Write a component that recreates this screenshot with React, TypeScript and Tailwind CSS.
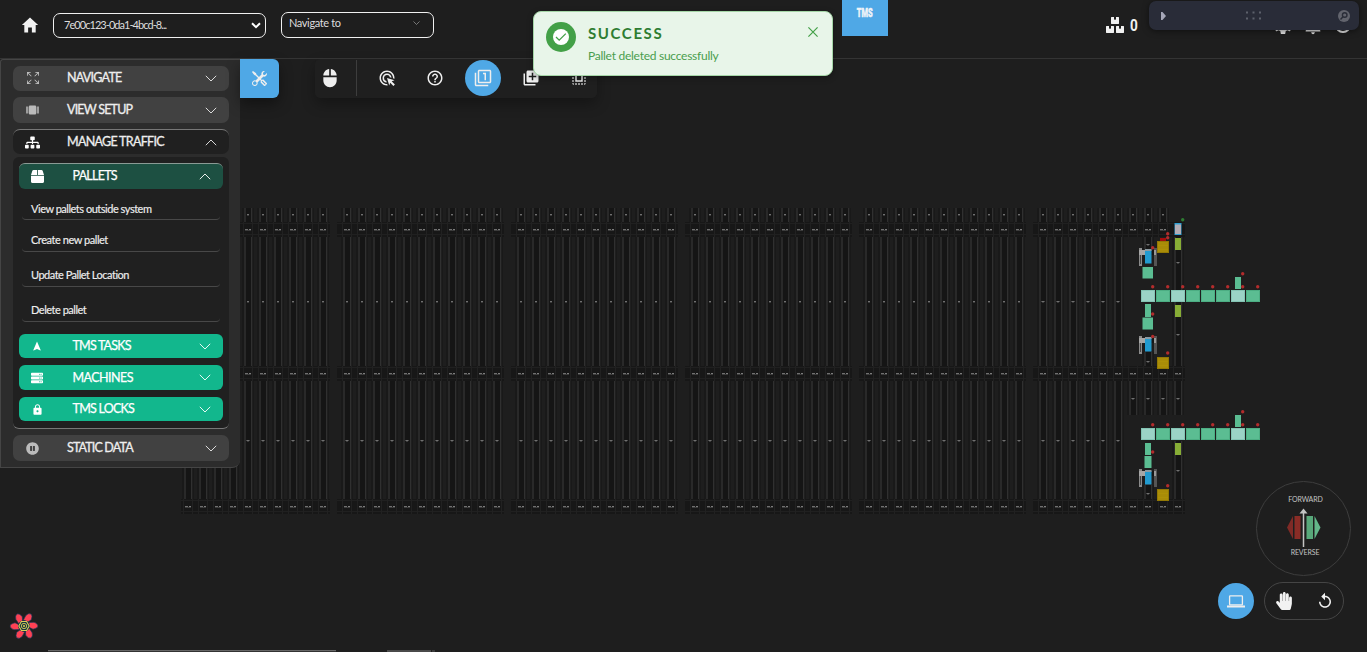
import React from "react";
import { IoMdHome, IoMdNavigate, IoMdLock, IoMdSettings } from "react-icons/io";
import { FaSitemap, FaBox, FaServer, FaPauseCircle, FaBoxes, FaHandPaper } from "react-icons/fa";
import { MdMouse, MdAdsClick, MdHelpOutline, MdFilter1, MdAddToPhotos, MdSelectAll, MdReplay, MdNotifications } from "react-icons/md";
import { BsTools, BsArrowsFullscreen } from "react-icons/bs";

function Chevron({ up = false, className = "w-[12px]" }: { up?: boolean; className?: string }) {
  return (
    <svg viewBox="0 0 12 7" className={className} fill="none" stroke="currentColor" strokeWidth="0.9">
      <path d={up ? "M.8 6.2 6 1l5.200 5.200" : "M.8.8 6 6 11.200.8"} />
    </svg>
  );
}

function CarouselIcon() {
  return (
    <svg viewBox="0 0 13 10" className="w-[13px] h-[10px]" fill="currentColor">
      <rect x="3" y="0.500" width="7" height="9" rx=".7" />
      <rect x="0" y="1.500" width="2.500" height="7" opacity=".75" />
      <rect x="10.500" y="1.500" width="2.500" height="7" opacity=".75" />
    </svg>
  );
}

/* ---------- floor map ---------- */

const range = (from: number, to: number) => {
  const xs: number[] = [];
  for (let x = from; x <= to; x += 15) xs.push(x);
  return xs;
};

const blocks = [range(188, 323), range(347, 497), range(521, 671), range(695, 845), range(869, 1019)];
const aisles = blocks.flat();

function Lane({ x, y1, y2 }: { x: number; y1: number; y2: number }) {
  const h = y2 - y1;
  return (
    <g>
      <rect x={x - 6} y={y1} width="12" height={h} fill="#191919" />
      <rect x={x - 4} y={y1} width="9" height={h} fill="#151515" />
      <rect x={x - 4} y={y1} width="2" height={h} fill="#292929" />
      <rect x={x + 3} y={y1} width="1" height={h} fill="#303030" />
      <rect x={x + 4} y={y1} width="1" height={h} fill="#1f1f1f" />
    </g>
  );
}

function Hub({ x1, x2, y, xs }: { x1: number; x2: number; y: number; xs: number[] }) {
  return (
    <g>
      <rect x={x1} y={y - 7} width={x2 - x1} height="15" fill="#171717" />
      <rect x={x1} y={y - 6} width={x2 - x1} height="1" fill="#202020" />
      <rect x={x1} y={y + 5} width={x2 - x1} height="1" fill="#202020" />
      {xs.map((x) => (
        <g key={x}>
          <rect x={x - 5} y={y - 7} width="1" height="15" fill="#212121" />
          <rect x={x + 4} y={y - 7} width="1" height="15" fill="#212121" />
          <rect x={x - 3} y={y} width="3" height="1" fill="#707070" />
          <rect x={x + 1} y={y} width="2" height="1" fill="#7c7c7c" />
          <rect x={x - 3} y={y + 1} width="6" height="1" fill="#3c3c3c" />
        </g>
      ))}
    </g>
  );
}

function Mark({ x, y, wide = false }: { x: number; y: number; wide?: boolean }) {
  return (
    <g>
      {wide && <rect x={x - 2} y={y} width="4" height="1" fill="#484848" />}
      <rect x={x - 1} y={y} width="2" height="1" fill="#707070" />
      <rect x={x - 1} y={y + 1} width="2" height="1" fill="#3a3a3a" />
    </g>
  );
}

function Lift({ x, y }: { x: number; y: number }) {
  return (
    <g>
      <rect x={x - 9} y={y} width="3" height="18" fill="#8a8a8a" />
      <rect x={x - 8} y={y + 5} width="1" height="11" fill="#444" />
      <rect x={x + 6} y={y} width="3" height="18" fill="#555" />
      <rect x={x + 6} y={y + 2} width="2" height="5" fill="#999" />
      <rect x={x - 9} y={y + 2} width="15" height="5" fill="#a6a6a6" />
      <rect x={x + 3} y={y + 2} width="3" height="5" fill="#151515" />
      <rect x={x - 3} y={y + 2} width="6.500" height="13.500" fill="#229bd0" />
      <rect x={x - 3} y={y + 1} width="6.500" height="2" fill="#8a9aa2" />
    </g>
  );
}

function Conveyor({ y }: { y: number }) {
  return (
    <g>
      {[0, 1, 2, 3, 4, 5, 6, 7].map((i) => (
        <g key={i}>
          <rect x={1141.500 + i * 15} y={y + 0.500} width="13" height="11" fill={[0, 2, 6].includes(i) ? "#9bd3c6" : "#5bbd92"} stroke={[0, 2, 6].includes(i) ? "#84c4b4" : "#4cae83"} />
          <circle cx={1152.700 + i * 15} cy={y - 3.300} r="1.700" fill="#b32c2c" />
        </g>
      ))}
      <rect x="1235" y={y - 13} width="6" height="12" fill="#5bbd92" />
      <circle cx="1242.700" cy={y - 16.300} r="1.700" fill="#b32c2c" />
    </g>
  );
}

function FloorMap() {
  const hubYs = [229, 373, 506];
  return (
    <svg viewBox="0 0 1367 652" className="absolute inset-0 w-[1367px] h-[652px]" shapeRendering="crispEdges">
      {aisles.map((x) => (
        <g key={x}>
          <Lane x={x} y1={x < 240 ? 400 : 208} y2={508} />
          {x > 240 && <Mark x={x} y={214} />}
          {x > 240 && <Mark x={x} y={301} />}
          <Mark x={x} y={440} wide />
        </g>
      ))}
      {range(1043, 1118).map((x) => (
        <g key={x}>
          <Lane x={x} y1={208} y2={508} />
          <Mark x={x} y={214} />
          <Mark x={x} y={301} wide />
          <Mark x={x} y={440} wide />
        </g>
      ))}
      {[1133, 1148, 1163].map((x) => (
        <g key={x}>
          <Lane x={x} y1={208} y2={223} />
          <Mark x={x} y={214} />
        </g>
      ))}
      {range(1133, 1178).map((x) => (
        <g key={x}>
          <Lane x={x} y1={380} y2={415} />
          <Mark x={x} y={398} wide />
        </g>
      ))}
      <Lane x={1178} y1={236} y2={368} />
      <Lane x={1148} y1={237} y2={252} />
      <Lane x={1148} y1={352} y2={368} />
      <Lane x={1178} y1={441} y2={500} />
      <Lane x={1148} y1={485} y2={500} />
      <Mark x={1148} y={244} wide />
      <Mark x={1178} y={262} wide />
      <Mark x={1178} y={334} wide />
      <Mark x={1148} y={361} wide />
      <Mark x={1178} y={470} wide />
      <Mark x={1148} y={493} wide />
      {hubYs.map((y) => (
        <g key={y}>
          {blocks.map((xs) => (
            <Hub key={xs[0]} x1={xs[0] - (xs[0] === 188 ? 7 : 10)} x2={xs[xs.length - 1] + 7} y={y} xs={xs} />
          ))}
          <Hub x1={1033} x2={1185} y={y} xs={range(1043, y === 229 ? 1163 : 1178)} />
        </g>
      ))}
      <rect x="180" y="200" width="60" height="100" fill="#1e1e1e" />
      <g shapeRendering="auto">
        <rect x="1174.500" y="223" width="7" height="12" fill="#2d9fd3" />
        <rect x="1175" y="224.500" width="6" height="9.500" fill="#b3adb5" />
        <circle cx="1182.700" cy="219.700" r="1.700" fill="#2e7d32" />
        <rect x="1175" y="238" width="6" height="12" fill="#87ad36" />
        <rect x="1175" y="305" width="6" height="12" fill="#87ad36" />
        <rect x="1175" y="443" width="6" height="12" fill="#87ad36" />
        <rect x="1160" y="238" width="6" height="3" fill="#a30d0d" />
        {[[1157, 241], [1157, 357], [1157, 489]].map(([x, y]) => (
          <g key={y}>
            <rect x={x + 0.500} y={y + 0.500} width="11" height="11" fill="#a98c08" stroke="#937904" />
            <path d={`M${x + 1} ${y + 4.500}h10M${x + 1} ${y + 8.500}h10`} stroke="#b29607" strokeWidth=".6" />
          </g>
        ))}
        <Lift x={1148} y={248} />
        <Lift x={1148} y={336} />
        <Lift x={1148} y={469} />
        <rect x="1142.500" y="267" width="10.500" height="11.500" fill="#5bbd92" />
        <rect x="1145" y="304" width="6" height="13" fill="#5bbd92" />
        <rect x="1142.500" y="317.500" width="10.500" height="12" fill="#5bbd92" />
        <rect x="1145" y="443" width="6" height="12" fill="#5bbd92" />
        <rect x="1144.500" y="456" width="7" height="12" fill="#5bbd92" />
        {[[1167.700, 233.700], [1167.700, 237.700], [1152.700, 247.700], [1152.700, 314], [1152.700, 336.500], [1167.700, 353], [1152.700, 452], [1167.700, 485.700]].map(([x, y]) => (
          <circle key={`${x}-${y}`} cx={x} cy={y} r="1.700" fill="#b32c2c" />
        ))}
        <Conveyor y={290} />
        <Conveyor y={428} />
      </g>
    </svg>
  );
}

/* ---------- header ---------- */

function Header() {
  return (
    <header className="relative flex h-[59px] w-full items-start border-b border-[#343434]">
      <IoMdHome className="ml-[20px] mt-[15px] size-[20px] text-[#f2f2f2]" />
      <button className="ml-[13px] mt-[13px] flex h-[25px] w-[213px] items-center rounded-[7px] border border-[#f0f0f0] pl-[10px] pr-[4px] text-[11px] tracking-[-0.95px] text-[#ddd]">
        <span className="whitespace-nowrap">7e00c123-0da1-4bcd-8...</span>
        <svg viewBox="0 0 10 7" className="ml-auto w-[10px]" fill="none" stroke="#fff" strokeWidth="2">
          <path d="M1 1.200 5 5.200 9 1.200" />
        </svg>
      </button>
      <button className="ml-[15px] mt-[12px] flex h-[26px] w-[153px] items-start rounded-[7px] border border-[#f0f0f0] pl-[7px] pr-[13px] pt-[2px] text-[11px] leading-[16px] tracking-[-0.38px] text-[#ddd]">
        <span>Navigate to</span>
        <Chevron className="ml-auto mt-[6px] w-[7px] text-[#ccc]" />
      </button>
      <div className="ml-[408px] flex h-[36px] w-[46px] justify-center bg-[#4fa8e6] pt-[5px] font-['Roboto'] text-[12px] font-black leading-[16px] text-[#eef3f8]">
        <span className="block origin-center scale-x-[0.62] [-webkit-text-stroke:0.5px_#eef3f8]">TMS</span>
      </div>
      <div className="ml-[218px] mt-[15px] flex h-[20px] w-[34px] items-center text-[#f0f0f0]">
        <FaBoxes className="size-[18px] shrink-0" />
        <span className="ml-[5px] block scale-x-[0.8] font-['Roboto'] text-[17px] font-bold leading-[20px]">0</span>
      </div>
      <div className="ml-[132px] mt-[14px] flex gap-[8px] text-[#e6e6e6]">
        <IoMdSettings className="size-[22px]" />
        <MdNotifications className="size-[22px]" />
        <svg viewBox="0 0 22 22" className="size-[22px]" fill="none" stroke="currentColor" strokeWidth="2">
          <circle cx="11" cy="11" r="7" />
        </svg>
      </div>
      <div className="absolute left-[1149px] top-px flex h-[29px] w-[210px] items-center justify-between rounded-[7px] bg-[#292c38] pl-[12px] pr-[9px] shadow-[0_1px_6px_rgba(0,0,0,0.5)]">
        <svg viewBox="0 0 5 8" className="w-[5px]" fill="#a5a7b8"><path d="M0 0h1.500L5 4 1.500 8H0z" /></svg>
        <svg viewBox="0 0 16 9" className="ml-[3px] w-[16px]" fill="#5d606b">
          {[0, 6.500, 13].map((x) => [0, 6].map((y) => <rect key={`${x}${y}`} x={x} y={y + 0.500} width="2" height="2" />))}
        </svg>
        <svg viewBox="0 0 12 12" className="w-[12px]" fill="none" stroke="#2a2d38" strokeWidth="1.400">
          <circle cx="6" cy="6" r="6" fill="#62646d" stroke="none" />
          <circle cx="6.700" cy="5" r="2.300" />
          <path d="M5 6.800 2.500 9.500" />
        </svg>
      </div>
    </header>
  );
}

/* ---------- sidebar ---------- */

function SectionRow({ icon, label, tracking, className, open = false }: { icon: React.ReactNode; label: string; tracking: string; className: string; open?: boolean }) {
  return (
    <button className={`flex w-[216px] shrink-0 items-center rounded-[7px] pr-[12px] text-[#eee] ${className}`}>
      <span className="ml-[10px] flex w-[19px] justify-center">{icon}</span>
      <span className={`ml-[25px] whitespace-nowrap text-[12.5px] leading-[16px] [-webkit-text-stroke:0.3px_#eee] ${tracking}`}>{label}</span>
      <Chevron up={open} className="ml-auto w-[12px]" />
    </button>
  );
}

function SubRow({ icon, label, tracking, className, open = false }: { icon: React.ReactNode; label: string; tracking: string; className: string; open?: boolean }) {
  return (
    <button className={`mx-[6px] flex w-[204px] shrink-0 items-center rounded-[6px] pr-[12px] text-white ${className}`}>
      <span className="ml-[9px] flex w-[18px] justify-center">{icon}</span>
      <span className={`ml-[26.5px] whitespace-nowrap text-[12.5px] leading-[16px] [-webkit-text-stroke:0.25px_#fff] ${tracking}`}>{label}</span>
      <Chevron up={open} className="ml-auto w-[12px]" />
    </button>
  );
}

function PalletLink({ label, className }: { label: string; className: string }) {
  return (
    <a className={`mx-[9px] flex shrink-0 items-end rounded-[4px] border-b border-[#484848] pl-[9px] text-[11px] leading-[14px] text-[#eee] [-webkit-text-stroke:0.15px_#eee] ${className}`}>
      <span className="whitespace-nowrap pb-[3px]">{label}</span>
    </a>
  );
}

function Sidebar() {
  return (
    <aside className="flex h-[409px] w-[240px] flex-col rounded-br-[8px] rounded-tl-[3px] border-b border-l border-t border-[#454545] bg-[#2c2c2c] pl-[12px] pt-[6px]">
      <SectionRow icon={<BsArrowsFullscreen className="size-[12px] text-[#ccc]" />} label="NAVIGATE" tracking="tracking-[-0.75px]" className="h-[25px] bg-[#414141] pb-px" />
      <SectionRow icon={<span className="text-[#bbb]"><CarouselIcon /></span>} label="VIEW SETUP" tracking="tracking-[-0.8px]" className="mt-[6px] h-[26px] bg-[#414141]" />
      <SectionRow open icon={<FaSitemap className="size-[15px] text-white" />} label="MANAGE TRAFFIC" tracking="tracking-[-0.7px]" className="mt-[6px] h-[25px] border-t border-[#777] bg-[#202020]" />
      <div className="mt-[3px] flex h-[272px] w-[216px] shrink-0 flex-col rounded-[6px] border-b border-[#777] bg-[#202020] pt-[6px]">
        <SubRow open icon={<FaBox className="size-[13px]" />} label="PALLETS" tracking="tracking-[-0.75px]" className="h-[26px] border-t border-[#8a9a94] bg-[#1d5042] pb-px" />
        <PalletLink label="View pallets outside system" className="h-[31px] tracking-[-0.48px]" />
        <PalletLink label="Create new pallet" className="h-[32px] pb-[1px] tracking-[-0.45px]" />
        <PalletLink label="Update Pallet Location" className="h-[35px] pb-[1px] tracking-[-0.5px]" />
        <PalletLink label="Delete pallet" className="h-[35px] pb-[1px] tracking-[-0.48px]" />
        <SubRow icon={<IoMdNavigate className="size-[12px]" />} label="TMS TASKS" tracking="tracking-[-0.8px]" className="mt-[12px] h-[24px] bg-[#12b78d]" />
        <SubRow icon={<FaServer className="size-[12px]" />} label="MACHINES" tracking="tracking-[-0.55px]" className="mt-[7px] h-[25px] bg-[#12b78d]" />
        <SubRow icon={<IoMdLock className="size-[13px]" />} label="TMS LOCKS" tracking="tracking-[-0.75px]" className="mt-[7px] h-[24px] bg-[#12b78d]" />
      </div>
      <SectionRow icon={<FaPauseCircle className="size-[13px] text-[#bbb]" />} label="STATIC DATA" tracking="tracking-[-0.85px]" className="mt-[6px] h-[26px] bg-[#414141]" />
    </aside>
  );
}

/* ---------- toolbar and overlays ---------- */

function Toolbar() {
  return (
    <div className="ml-[36px] flex h-[39px] w-[282px] items-center rounded-[5px] bg-[#1f1f1f] pb-px text-[#eee] shadow-[0_6px_14px_rgba(0,0,0,0.3)]">
      <MdMouse className="ml-[5px] size-[20px]" />
      <span className="ml-[16px] h-[36px] w-px bg-[#3d3d3d]" />
      <span className="ml-[12px] flex items-center gap-[12px]">
        <span className="flex size-[36px] items-center justify-center"><MdAdsClick className="size-[18px]" /></span>
        <span className="flex size-[36px] items-center justify-center"><MdHelpOutline className="size-[18px]" /></span>
        <span className="flex size-[36px] items-center justify-center rounded-full bg-[#4fa8e6]"><MdFilter1 className="size-[18px]" /></span>
        <span className="flex size-[36px] items-center justify-center"><MdAddToPhotos className="size-[18px]" /></span>
        <span className="flex size-[36px] items-center justify-center"><MdSelectAll className="size-[18px]" /></span>
      </span>
    </div>
  );
}

function Toast() {
  return (
    <div className="absolute left-[533px] top-[11px] flex h-[65px] w-[300px] rounded-[8px] border border-[#a5d6a7] bg-[#e8f5e9] pl-[12px] pr-[14px] shadow-[0_2px_6px_rgba(0,0,0,0.3)]">
      <div className="mt-[10px] flex size-[30px] shrink-0 items-center justify-center rounded-full bg-[#43a047]">
        <svg viewBox="0 0 16 16" className="size-[16px]">
          <circle cx="8" cy="8" r="8" fill="#fff" />
          <path d="m3 8 3.200 3.200 6.600-6.600" fill="none" stroke="#43a047" strokeWidth="1.300" />
        </svg>
      </div>
      <div className="ml-[12px] flex flex-col">
        <strong className="mt-[12px] text-[15px] font-bold leading-[18px] tracking-[1.6px] text-[#2e7d32]">SUCCESS</strong>
        <span className="mt-[6px] whitespace-nowrap text-[12px] leading-[16px] tracking-[-0.26px] text-[#4a9e4e]">Pallet deleted successfully</span>
      </div>
      <svg viewBox="0 0 10 10" className="ml-auto mt-[15px] size-[10px]" fill="none" stroke="#43a047" strokeWidth="1.200">
        <path d="m.4.400 9.200 9.200M9.600.400.400 9.600" />
      </svg>
    </div>
  );
}

function ViewControls() {
  return (
    <div className="absolute left-[1218px] top-[481px] flex w-[133px] flex-col items-end">
      <div className="flex size-[95px] flex-col items-center rounded-full border border-[#3d3d3d] pt-[13px] text-[7px] leading-[9px] tracking-[-0.1px] text-[#c4c4c4]">
        <span className="ml-[4px]">FORWARD</span>
        <svg viewBox="0 0 34 40" className="mt-[4px] ml-[1px] h-[40px] w-[34px] shrink-0">
          <path d="M6 8v23L0 19.500z" fill="#7f2a26" />
          <rect x="7.500" y="8" width="6" height="23" fill="#8a2c26" />
          <rect x="19.500" y="8" width="6.500" height="23" fill="#58a87a" />
          <path d="M27.500 8v23l6-11.500z" fill="#63b78a" />
          <path d="M16.500 4v35" stroke="#c4c4c4" strokeWidth="1.500" />
          <path d="m12.500 5.500 4-5 4 5z" fill="#c4c4c4" />
        </svg>
        <span className="ml-[3px]">REVERSE</span>
      </div>
      <div className="mr-[7px] mt-[6px] flex items-center gap-[10px]">
        <div className="flex size-[36px] items-center justify-center rounded-full bg-[#4fa8e6] text-[#eee]">
          <svg viewBox="0 0 18 13" className="w-[18px]" fill="none" stroke="currentColor" strokeWidth="1.300">
            <rect x="2.600" y=".8" width="12.800" height="9" rx=".6" />
            <path d="M0 11.500h18" strokeWidth="2" />
          </svg>
        </div>
        <div className="flex h-[38px] w-[80px] items-center justify-between rounded-full border border-[#454545] pl-[10px] pr-[9px] text-[#f2f2f2]">
          <FaHandPaper className="size-[18px]" />
          <MdReplay className="size-[18px]" />
        </div>
      </div>
    </div>
  );
}

function FlowerLogo() {
  return (
    <svg viewBox="-15 -15 30 30" className="absolute left-[9px] top-[611px] size-[30px]">
      {[0, 60, 120, 180, 240, 300].map((a) => (
        <path key={a} transform={`rotate(${a})`} d="M4.500-3.500 10-3.700Q13.500-2.800 14 0 13.500 2.500 9 3.200L5.500 1.500z" fill="#ff4154" stroke="#0b3a5c" strokeWidth=".6" />
      ))}
      <circle r="5.800" fill="#12333f" />
      <path d="M-2.600-4.500h5.200L5.200 0 2.600 4.500h-5.200L-5.200 0z" fill="none" stroke="#d9cd5a" strokeWidth="1.100" />
      <circle r="2.700" fill="none" stroke="#d9cd5a" strokeWidth=".9" />
      <circle r="1.200" fill="#b8b04a" />
    </svg>
  );
}

export default function App() {
  return (
    <div className="relative h-[652px] w-[1367px] overflow-hidden bg-[#1e1e1e] font-['Lato','Liberation_Sans',sans-serif]">
      <FloorMap />
      <div className="relative z-10 flex h-full flex-col">
        <Header />
        <main className="flex flex-1 items-start">
          <Sidebar />
          <button className="flex h-[39px] w-[39px] items-center justify-center rounded-r-[6px] bg-[#4fa8e6] text-[#eee] shadow-[0_6px_14px_rgba(0,0,0,0.4)]">
            <BsTools className="size-[15px]" />
          </button>
          <Toolbar />
        </main>
        <footer className="flex h-[2px] w-full">
          <span className="ml-[48px] h-[2px] w-[288px] border-t border-[#666] bg-[#333]" />
          <span className="ml-[51px] h-[2px] w-[44px] bg-[#4a4a4a]" />
          <span className="ml-px h-[2px] w-[3px] bg-[#3a3a3a]" />
        </footer>
        <ViewControls />
        <FlowerLogo />
        <Toast />
      </div>
    </div>
  );
}
